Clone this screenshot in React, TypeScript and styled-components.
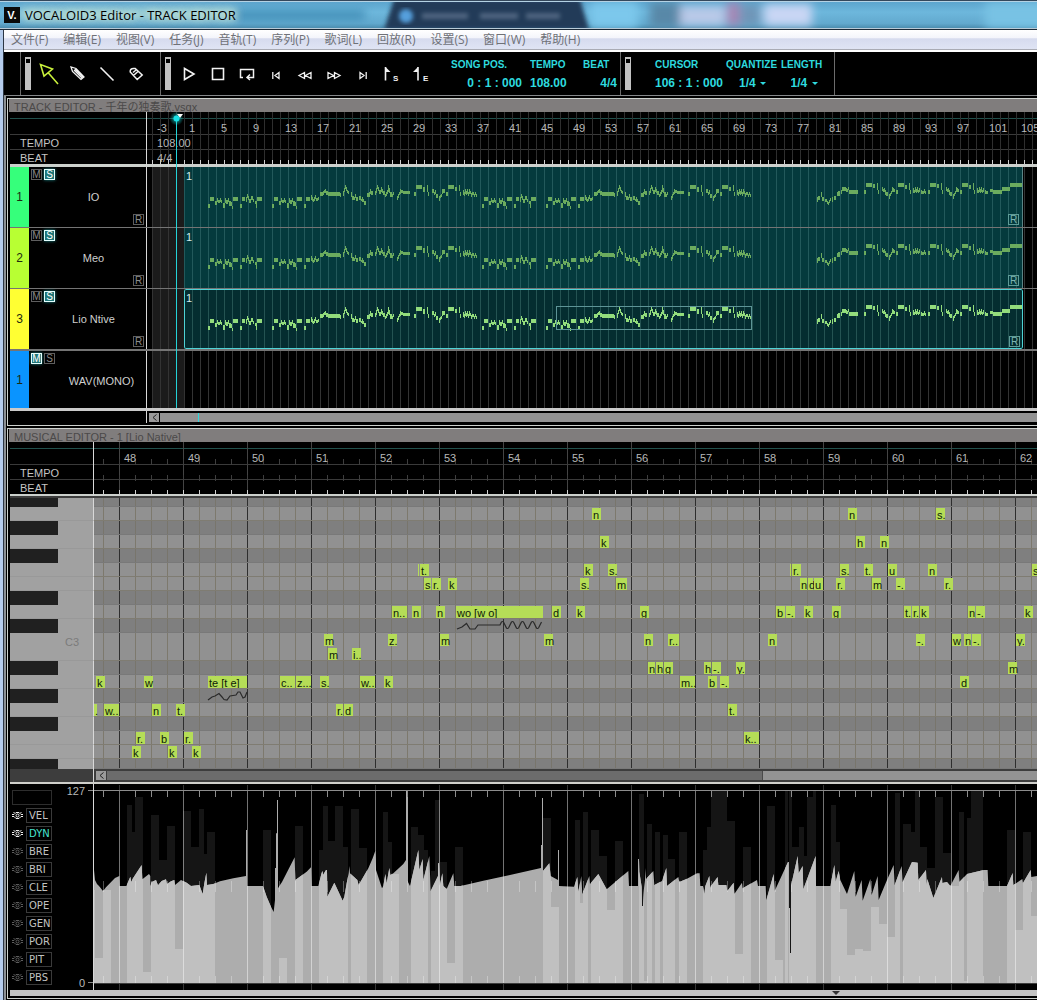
import React from "react";
import styled, { createGlobalStyle, css } from "styled-components";

const Global = createGlobalStyle`
  *, *::before, *::after { box-sizing: border-box; }
  html, body { margin: 0; background: #000; }
  body { font-family: "Liberation Sans", Arial, "Noto Sans CJK SC", sans-serif; font-size: 11px; color: #b8b8b8; overflow-x: hidden; }
  button, select { font: inherit; color: inherit; margin: 0; padding: 0; border: 0; background: none; }
  h1, h2 { margin: 0; font-weight: 400; }
`;

/* ---------- palette ---------- */
const CYAN = "#2edadf";
const RULE = "#ccd0cc";
const NOTE = "#b5dd57";

/* ---------- window frame ---------- */
const App_ = styled.div`
  min-height: 100vh;
  display: flex;
  flex-direction: column;
  overflow: hidden;
`;

const TitleBar = styled.header`
  position: relative;
  display: flex;
  align-items: center;
  gap: 5px;
  height: 30px;
  padding: 0 4px;
  overflow: hidden;
  background: linear-gradient(#5ba3cc, #6db7dc 40%, #62a9ce 80%, #4787a8);
  border-top: 1px solid #34485c;
  border-bottom: 1px solid #1c2a38;
  box-shadow: inset 0 1px #b4d2e4, inset 0 -1px #b9cbd8;
`;

const Glass = styled.svg`
  position: absolute;
  left: 0;
  top: 1px;
  width: 100%;
  height: 26px;
`;

const Logo = styled.div`
  position: relative;
  display: grid;
  place-items: center;
  width: 16px;
  height: 16px;
  background: #0a0a0a;
  color: #fff;
  font-size: 11px;
  font-weight: 700;
  line-height: 16px;
`;

const Title = styled.h1`
  position: relative;
  font-family: "Open Sans", "Noto Sans", sans-serif;
  font-size: 13px;
  line-height: 16px;
  color: #000;
  text-shadow: 0 0 6px rgba(230, 245, 220, 0.8), 0 0 10px rgba(230, 245, 220, 0.5);
`;

const Frame = styled.div`
  flex: 1;
  display: flex;
  flex-direction: column;
  min-width: 0;
  border-left: 1px solid #2c3644;
  margin-left: 3px;
  box-shadow: -3px 0 #b5ccec;
  background: #000;
`;

const MenuBar = styled.nav`
  display: flex;
  align-items: center;
  gap: 15px;
  height: 22px;
  padding: 0 7px 2px;
  background: linear-gradient(#fff, #f4f5fb 35%, #d6dbee 40%, #dfe4f4 86%, #a9abb4 87%, #a9abb4 91%, #fff 92%);
`;

const MenuItem = styled.button`
  font-family: "Open Sans", "Noto Sans CJK SC", sans-serif;
  font-size: 12px;
  line-height: 18px;
  color: #6f7177;
  white-space: nowrap;
`;

/* ---------- toolbar ---------- */
const ToolBar = styled.div`
  display: flex;
  height: 44px;
  padding-left: 16px;
  border-bottom: 1px solid #85888a;
  overflow: hidden;
`;

const ToolGroup = styled.div<{ $end?: number }>`
  display: flex;
  align-items: center;
  flex: none;
  padding: 0 ${(p) => p.$end ?? 0}px 0 4px;
  border-left: 1px solid #6c6c6c;
`;

const Bounds = styled.div`
  flex: 1;
  border-left: 1px solid #6c6c6c;
`;

const Grip = styled.div`
  width: 6px;
  height: 33px;
  padding: 2px 1px;
  background: #c2c2c2;
  &::before { content: ""; display: block; height: 4px; background: #000; }
`;

const Tools = styled.div<{ $start: number }>`
  display: flex;
  align-items: center;
  padding-left: ${(p) => p.$start}px;
`;

const ToolButton = styled.button`
  display: grid;
  place-items: center;
  width: 29px;
  height: 30px;
  svg { display: block; overflow: visible; }
`;

const Readouts = styled.div<{ $start: number }>`
  display: flex;
  gap: 8px;
  padding: 2px 0 0 ${(p) => p.$start}px;
  color: ${CYAN};
  font-weight: 700;
`;

const Field = styled.div<{ $w: number }>`
  display: flex;
  flex-direction: column;
  gap: 5px;
  width: ${(p) => p.$w}px;
  white-space: nowrap;
`;

const FieldLabel = styled.label`
  font-size: 10px;
  line-height: 12px;
`;

const FieldValue = styled.output<{ $right?: boolean }>`
  font-size: 12px;
  line-height: 14px;
  align-self: ${(p) => (p.$right ? "flex-end" : "flex-start")};
`;

const Picker = styled.div`
  display: flex;
  align-items: center;
  gap: 4px;
  align-self: center;
  padding-left: 6px;
  &::after { content: ""; border: 3px solid transparent; border-top-color: ${CYAN}; border-bottom: 0; }
  select { appearance: none; font-size: 12px; font-weight: 700; line-height: 14px; height: 14px; outline: none; }
`;

/* ---------- panels ---------- */
const Workspace = styled.main`
  display: flex;
  flex-direction: column;
  gap: 2px;
  padding: 2px 0 1px 3px;
  background: linear-gradient(90deg, #8b9094 0 2px, #000 2px);
`;

const Panel = styled.section`
  border: 1px solid ${RULE};
  border-right: 0;
  padding: 0 0 2px 2px;
  background: #000;
  min-width: 0;
`;

const PanelTitle = styled.h2`
  height: 13px;
  margin-left: -1px;
  padding-left: 5px;
  font-size: 11px;
  line-height: 16px;
  overflow: hidden;
  white-space: nowrap;
  background: #807d7d;
  color: #4b4949;
`;

const Line = styled.div<{ $left: number }>`
  display: grid;
  grid-template-columns: ${(p) => p.$left}px minmax(0, 1fr);
`;

const Side = styled.div`
  border-right: 1px solid #d8d8d8;
  min-width: 0;
`;

const Ruler = styled.div<{ $heavy: number }>`
  border-bottom: ${(p) => p.$heavy}px solid ${RULE};
`;

const RulerRow = styled(Line)<{ $kind: "bars" | "tempo" | "beat" }>`
  height: ${(p) => ({ bars: 23, tempo: 15, beat: 14 })[p.$kind]}px;
  line-height: ${(p) => (p.$kind === "bars" ? 32 : 16)}px;
  background:
    ${(p) => (p.$kind === "bars" ? "linear-gradient(#21504c, #21504c) 0 6px / 100% 1px no-repeat," : "")}
    ${(p) => (p.$kind === "beat" ? "none" : "linear-gradient(#3a3a3a, #3a3a3a) 0 100% / 100% 1px no-repeat")};
`;

const RulerName = styled(Side)`
  padding-left: 10px;
  color: #c4c4c4;
`;

const BarNumbers = styled.div<{ $start: number }>`
  display: flex;
  padding-left: ${(p) => p.$start}px;
  overflow: hidden;
`;

const BarNumber = styled.span<{ $pitch: number }>`
  flex: none;
  width: ${(p) => p.$pitch}px;
  padding-left: 5px;
`;

const SongTicks = styled.div<{ $beat?: boolean; $flush?: boolean }>`
  overflow: hidden;
  padding-left: ${(p) => (p.$flush ? 0 : 10)}px;
  background:
    ${(p) => (p.$beat ? "linear-gradient(90deg, #d0d0d0 1px, transparent 1px) 5px 100% / 8px 6px repeat-x," : "")}
    linear-gradient(90deg, #2e2e2e 1px, transparent 1px) 5px 2px / 8px 100%;
`;

const MeasureTicks = styled.div<{ $beat?: boolean }>`
  overflow: hidden;
  background:
    linear-gradient(90deg, ${(p) => (p.$beat ? "#d0d0d0" : "#3e3e3e")} 1px, transparent 1px) 9px 100% / 16px 6px repeat-x,
    linear-gradient(90deg, #444 1px, transparent 1px) 25px 2px / 64px 100%;
`;

/* ---------- track list ---------- */
const Stage = styled.div`
  position: relative;
`;

const Playhead = styled.svg`
  position: absolute;
  left: 158px;
  top: 0;
  width: 20px;
  height: 296px;
`;

const TrackRow = styled(Line)<{ $line: number; $height: number; $strong?: boolean }>`
  height: ${(p) => p.$height}px;
  border-bottom: ${(p) => p.$line}px solid ${(p) => (p.$strong ? "#cacaca" : "#747474")};
`;

const TrackHead = styled(Side)`
  display: flex;
`;

const TrackIndex = styled.div<{ $color: string }>`
  display: grid;
  place-items: center;
  width: 19px;
  background: ${(p) => p.$color};
  color: #1c2a10;
  font-size: 12px;
`;

const TrackInfo = styled.div`
  flex: 1;
  display: flex;
  flex-direction: column;
  justify-content: space-between;
  padding: 2px;
`;

const Switches = styled.div`
  display: flex;
  gap: 2px;
`;

const chip = css`
  display: grid;
  place-items: center;
  width: 11px;
  height: 11px;
  border: 1px solid #5e5e5e;
  color: #8a8a8a;
  font-size: 10px;
  line-height: 9px;
`;

const Switch = styled.button<{ $on?: boolean }>`
  ${chip}
  ${(p) => p.$on && css`
    background: #1f7678;
    border-color: #e4ffff;
    color: #fff;
    box-shadow: 0 0 3px #1f8a8c;
  `}
`;

const Render = styled.button<{ $teal?: boolean }>`
  ${chip}
  align-self: flex-end;
  ${(p) => p.$teal && css`
    border-color: #5f9c98;
    color: #7db4b0;
  `}
`;

const SwitchGap = styled.div`
  height: 9px;
`;

const TrackName = styled.div<{ $wide?: boolean }>`
  padding-left: ${(p) => (p.$wide ? 28 : 12)}px;
  text-align: center;
  line-height: 14px;
  color: #cfcfcf;
`;

const Timeline = styled.div`
  display: flex;
  overflow: hidden;
  padding-left: 37px;
  background:
    linear-gradient(90deg, #333 1px, transparent 1px) 5px 0 / 8px 100%,
    linear-gradient(#1b1b1b, #1b1b1b) 5px 0 / 32px 100% no-repeat;
`;

const EmptyTimeline = styled(Timeline)`
  height: 100%;
`;

const Clip = styled.div<{ $active?: boolean }>`
  position: relative;
  flex: none;
  width: 839px;
  height: 60px;
  background:
    linear-gradient(90deg, ${(p) => (p.$active ? "#245352" : "#22595b")} 1px, transparent 1px) 0 0 / 8px 100%,
    ${(p) => (p.$active ? "#042d30" : "#043a3d")};
  border-right: 1px solid #5b8587;
  ${(p) => p.$active && css`
    border: 0;
    border-radius: 2px;
    box-shadow: inset 0 0 0 1px #4fd3d6;
  `}
`;

const ClipIndex = styled.span`
  position: absolute;
  left: 2px;
  top: 2px;
  line-height: 14px;
  color: #d5ecec;
`;

const ClipNotes = styled.svg`
  display: block;
  width: 838px;
  height: 60px;
`;

const ClipRender = styled.div`
  position: absolute;
  right: 3px;
  bottom: 2px;
`;

const ViewRange = styled.div`
  position: absolute;
  left: 372px;
  top: 17px;
  width: 196px;
  height: 24px;
  border: 1px solid #5d9496;
`;

/* ---------- scroll bars ---------- */
const ScrollRow = styled(Line)<{ $dark?: boolean }>`
  height: ${(p) => (p.$dark ? 13 : 12)}px;
  background: ${(p) => (p.$dark ? "#3d3d3d" : "#000")};
`;

const Scroll = styled.div`
  display: flex;
  gap: 1px;
  padding: 2px 0 0 2px;
  height: 11px;
`;

const ScrollArrow = styled.button`
  display: grid;
  place-items: center;
  width: 10px;
  height: 9px;
  background: #9a9a9a;
`;

const ScrollTrack = styled.div`
  flex: 1;
  display: flex;
  background: #939393;
`;

const ScrollCursor = styled.i`
  width: 1px;
  height: 9px;
  margin-left: 38px;
  background: ${CYAN};
`;

const ScrollThumb = styled.i`
  width: calc(100% * 12 / 17);
  height: 9px;
  background: #6c6c6c;
  border-right: 1px solid #4a4a4a;
`;

/* ---------- piano roll ---------- */
const Roll = styled.div`
  position: relative;
  overflow: hidden;
  border-top: 2px solid #3d3d3d;
`;

const KeyRow = styled(Line)<{ $height: number }>`
  height: ${(p) => p.$height}px;
`;

const Key = styled(Side)<{ $black: boolean }>`
  padding-left: 55px;
  line-height: 18px;
  color: #7b7b7b;
  border-bottom: ${(p) => (p.$black ? 0 : 1)}px solid #999;
  background: ${(p) => (p.$black ? "linear-gradient(#202020, #202020) 0 0 / 48px 100% no-repeat," : "")} #a1a1a1;
`;

const KeyLane = styled.div<{ $black: boolean }>`
  border-bottom: 1px solid ${(p) => (p.$black ? "#797979" : "#7f7c72")};
  background:
    linear-gradient(90deg, #2e2e2e 1px, transparent 1px) 25px 0 / 64px 15px,
    linear-gradient(90deg, ${(p) => (p.$black ? "#78756c" : "#7d796d")} 1px, transparent 1px) 9px 0 / 16px 15px,
    ${(p) => (p.$black ? "#7f7f7f" : "#919191")};
`;

const NoteLayer = styled.div`
  position: absolute;
  inset: 0 0 0 84px;
  overflow: hidden;
`;

const NoteBox = styled.div`
  position: absolute;
  height: 12px;
  padding-left: 1px;
  overflow-x: visible;
  overflow-y: clip;
  white-space: nowrap;
  line-height: 14px;
  color: #0d1a08;
  background: ${NOTE};
`;

const Vibrato = styled.svg`
  position: absolute;
  inset: 0;
  width: 100%;
  height: 100%;
`;

/* ---------- parameter lane ---------- */
const ParamLane = styled(Line)`
  height: 208px;
  border-top: 2px solid #cfcfcb;
`;

const ParamSide = styled(Side)`
  display: flex;
  justify-content: space-between;
  padding: 0 0 0 2px;
`;

const ParamList = styled.div`
  display: flex;
  flex-direction: column;
  gap: 3px;
  padding-top: 6px;
`;

const ParamBlank = styled.div`
  width: 40px;
  height: 15px;
  border: 1px solid #2d2d2d;
`;

const ParamRow = styled.div`
  display: flex;
  align-items: center;
  gap: 3px;
`;

const EyeButton = styled.button<{ $on: boolean }>`
  display: grid;
  place-items: center;
  width: 11px;
  height: 15px;
  color: ${(p) => (p.$on ? "#f0f0f0" : "#5c5c5c")};
`;

const ParamButton = styled.button<{ $active: boolean }>`
  width: 26px;
  height: 15px;
  padding-left: 2px;
  border: 1px solid #3a3a3a;
  font-family: "DejaVu Sans", sans-serif;
  font-size: 10px;
  line-height: 13px;
  text-align: left;
  white-space: nowrap;
  color: ${(p) => (p.$active ? "#46e0cf" : "#c2c2c2")};
`;

const Scale = styled.div`
  display: flex;
  flex-direction: column;
  justify-content: space-between;
  align-items: flex-end;
  width: 30px;
`;

const ScaleMark = styled.div`
  display: flex;
  gap: 3px;
  line-height: 14px;
  &::after { content: ""; width: 5px; height: 1px; margin-top: 6px; background: #8a8a8a; }
`;

const Chart = styled.svg`
  display: block;
  width: 100%;
  height: 206px;
  overflow: hidden;
`;

const Splitter = styled.div`
  height: 6px;
  padding: 1px 0 0 80%;
  background: #c3c3c3;
  svg { display: block; }
`;

/* ---------- song data ---------- */
type Rect = [number, number, number, number];
const shift = (notes: Rect[], dx: number): Rect[] => notes.map(([x, y, w, h]) => [x + dx, y, w, h]);

const verse: Rect[] = [
  [624, 327, 6, 12], [630, 306, 12, 12], [645, 318, 6, 12], [651, 309, 3, 12], [654, 315, 6, 9], [660, 309, 3, 12],
  [663, 315, 3, 9], [669, 324, 6, 14], [675, 309, 3, 14], [678, 315, 6, 12], [684, 309, 3, 12], [687, 318, 6, 14],
  [693, 321, 3, 12], [696, 333, 3, 10], [699, 306, 15, 12],
];
const verseEnd: Rect[] = [
  [720, 327, 6, 12], [726, 306, 9, 12], [738, 306, 3, 15], [741, 297, 3, 12], [744, 303, 3, 12], [747, 312, 6, 12],
  [753, 303, 6, 12], [759, 312, 3, 9], [765, 318, 6, 8], [768, 318, 3, 20], [771, 306, 15, 12],
];
const bridge: Rect[] = [
  [912, 327, 6, 12], [918, 306, 12, 12], [933, 300, 3, 15], [936, 306, 3, 12], [939, 312, 3, 10], [942, 306, 3, 12],
  [945, 300, 3, 12], [948, 309, 6, 10], [954, 306, 3, 10], [960, 291, 9, 12], [969, 288, 3, 12], [972, 285, 3, 10],
  [975, 282, 3, 12], [978, 288, 6, 12], [984, 291, 36, 12], [1020, 294, 3, 12],
];
const chorus: Rect[] = shift([
  [9, 288, 3, 14], [12, 279, 3, 12], [15, 270, 3, 12], [18, 276, 3, 12], [21, 285, 3, 9], [24, 288, 3, 9],
  [33, 291, 3, 14], [36, 303, 6, 12], [42, 306, 3, 9], [45, 297, 3, 12], [48, 306, 6, 12], [57, 303, 6, 12],
  [63, 312, 3, 6], [66, 306, 3, 14], [69, 312, 3, 9], [72, 318, 6, 12], [81, 294, 6, 12], [87, 291, 3, 14],
  [90, 282, 3, 14], [93, 288, 6, 12], [105, 288, 3, 12], [108, 279, 3, 14], [111, 270, 3, 12], [114, 276, 3, 12],
  [117, 285, 6, 12], [123, 276, 3, 14], [126, 282, 3, 12], [129, 288, 6, 12], [135, 297, 3, 10], [138, 291, 3, 12],
  [141, 285, 3, 12], [144, 270, 3, 20], [147, 279, 3, 14], [150, 291, 6, 14], [156, 297, 3, 9], [159, 291, 3, 9],
  [171, 303, 3, 12], [174, 297, 3, 12], [177, 291, 3, 9], [180, 282, 3, 14], [183, 285, 6, 9], [189, 288, 21, 10],
  [222, 291, 6, 12], [228, 270, 18, 12], [249, 276, 6, 14], [261, 270, 3, 20], [264, 291, 3, 12], [276, 282, 6, 12],
  [282, 291, 3, 9], [285, 285, 3, 12], [288, 297, 6, 12], [297, 303, 3, 14], [300, 300, 3, 10], [303, 297, 3, 9],
  [306, 282, 3, 14], [309, 282, 6, 12], [318, 291, 6, 12], [324, 270, 18, 12], [345, 276, 6, 12], [357, 270, 3, 18],
  [360, 291, 3, 12], [369, 285, 3, 14], [372, 291, 3, 12], [375, 282, 3, 14], [378, 288, 3, 12], [381, 282, 3, 14],
  [384, 291, 3, 12], [387, 282, 3, 14], [390, 288, 3, 9], [393, 294, 3, 12], [396, 291, 6, 9], [402, 297, 3, 9],
  [405, 291, 3, 9], [408, 297, 3, 10],
], 1020);
const opening = [...verse, ...verseEnd, ...shift(verse, 192), ...bridge, ...chorus];

const rise: Rect[] = [
  [390, 306, 3, 15], [393, 303, 6, 12], [402, 291, 3, 15], [405, 306, 6, 12], [414, 312, 6, 9], [420, 318, 3, 9],
  [423, 321, 3, 9], [426, 315, 3, 10], [429, 309, 3, 9], [435, 306, 3, 15], [441, 303, 6, 12], [450, 291, 3, 12],
  [453, 288, 6, 14], [462, 285, 3, 12], [465, 276, 12, 12], [477, 279, 3, 12], [480, 282, 3, 9], [483, 276, 3, 9],
  [486, 285, 27, 12],
];
const hookA: Rect[] = [
  [531, 285, 6, 12], [537, 264, 18, 12], [558, 267, 6, 12], [570, 264, 3, 20], [573, 285, 3, 12], [585, 276, 3, 12],
  [588, 282, 3, 9], [591, 279, 3, 12], [594, 285, 3, 14], [597, 291, 6, 12], [606, 297, 3, 14], [609, 294, 3, 10],
  [612, 288, 3, 9], [615, 276, 3, 14], [618, 279, 3, 12], [621, 282, 3, 9],
];
const hookB: Rect[] = [
  [627, 285, 6, 12], [633, 264, 18, 12], [654, 270, 6, 12], [666, 264, 3, 20], [669, 285, 3, 12], [678, 279, 3, 14],
  [681, 285, 3, 9], [684, 276, 3, 14], [687, 282, 3, 12], [690, 276, 3, 14], [693, 285, 3, 9], [696, 279, 3, 12],
  [702, 285, 3, 12], [705, 288, 6, 9],
];
const ending: Rect[] = [
  [711, 282, 3, 12], [714, 288, 3, 10], [909, 282, 9, 9], [918, 286, 27, 10], [945, 276, 24, 12], [969, 264, 36, 12],
];
const finale = shift([...rise, ...hookA, ...hookB, ...shift(hookA, 192), ...shift(hookB, 192), ...ending], 2061);

const songPath = [...opening, ...shift(opening, 822), ...finale]
  .map(([x, y, w, h]) => `M${x} ${y}h${w}v${h}h${-w}z`)
  .join("");

const tracks = [
  { id: 1, name: "IO", color: "#36ff7b" },
  { id: 2, name: "Meo", color: "#b8ff33" },
  { id: 3, name: "Lio Ntive", color: "#ffff33" },
];

const songBars = Array.from({ length: 28 }, (_, i) => (i === 0 ? -3 : 1 + (i - 1) * 4));
const measures = Array.from({ length: 15 }, (_, i) => 48 + i);

/* x, width, pitch row, lyric */
type Note = [number, number, number, string];
const notes: Note[] = [
  [96, 9, 12, "k"], [144, 9, 12, "w"], [94, 3, 14, "."], [104, 15, 14, "w.."], [152, 9, 14, "n"], [176, 9, 14, "t."],
  [136, 9, 16, "r."], [132, 9, 17, "k"], [160, 9, 16, "b"], [168, 9, 17, "k"], [184, 9, 16, "r."], [192, 9, 17, "k"],
  [208, 39, 12, "te [t e]"], [280, 15, 12, "c.."], [296, 15, 12, "z..."], [320, 9, 12, "s."], [324, 9, 9, "m"],
  [328, 9, 10, "m"], [336, 7, 14, "r."], [344, 9, 14, "d"], [352, 9, 10, "i.."], [360, 15, 12, "w.."], [384, 9, 12, "k"],
  [388, 9, 9, "z."], [392, 15, 7, "n.."], [412, 9, 7, "n"], [436, 9, 7, "n"], [418, 1, 4, ""], [420, 9, 4, "t."],
  [424, 7, 5, "s"], [432, 9, 5, "r."], [448, 9, 5, "k"], [440, 9, 9, "m"], [456, 87, 7, "wo [w o]"], [544, 9, 9, "m"],
  [552, 9, 7, "d"], [576, 9, 7, "k"], [580, 9, 5, "s."], [584, 9, 4, "k"], [592, 9, 0, "n"], [600, 9, 2, "k"],
  [608, 9, 4, "s."], [616, 11, 5, "m"], [640, 9, 7, "g"], [644, 9, 9, "n"], [668, 11, 9, "r.."], [648, 7, 11, "n"],
  [656, 7, 11, "h"], [664, 9, 11, "g"], [680, 15, 12, "m.."], [704, 7, 11, "h"], [712, 9, 11, "-."], [736, 9, 11, "y."],
  [708, 9, 12, "b"], [720, 9, 12, "-."], [728, 9, 14, "t."], [744, 15, 16, "k.."], [768, 9, 9, "n"], [776, 9, 7, "b"],
  [786, 9, 7, "-."], [804, 9, 7, "k"], [790, 1, 4, ""], [792, 9, 4, "r."], [800, 7, 5, "n"], [808, 5, 5, "d"],
  [814, 9, 5, "u"], [832, 9, 7, "g"], [836, 9, 5, "r."], [840, 9, 4, "s."], [848, 9, 0, "n"], [856, 9, 2, "h"],
  [864, 9, 4, "t."], [872, 9, 5, "m"], [880, 9, 2, "n"], [888, 9, 4, "u"], [896, 9, 5, "-."], [904, 7, 7, "t."],
  [912, 7, 7, "r."], [920, 9, 7, "k"], [916, 9, 9, "-."], [928, 9, 4, "n"], [936, 9, 0, "s."], [944, 9, 5, "r."],
  [952, 9, 9, "w"], [964, 7, 9, "n"], [972, 9, 9, "-."], [968, 7, 7, "n"], [976, 9, 7, "-."], [960, 9, 12, "d"],
  [1016, 9, 9, "y."], [1008, 9, 11, "m"], [1024, 9, 7, "k"], [1032, 9, 4, "s"],
];

const keyPattern = "BWBWBWWBWBWWBWBWBWWB";
const keyHeight = (i: number) => (i === 0 ? 9 : i === keyPattern.length - 1 ? 10 : 14);

/* velocity columns, one list for each third of the lane: start, end, top */
type Column = [number, number, number];
const velocity: [number, Column[]][] = [
  [0, [[282, 285, 330], [285, 309, 533], [309, 333, 330], [380, 396, 75], [396, 405, 156], [405, 429, 51], [429, 453, 575],
    [453, 477, 105], [477, 501, 240], [501, 525, 138], [525, 549, 506], [549, 573, 93], [573, 597, 201], [597, 612, 87],
    [612, 621, 222], [621, 645, 156], [789, 813, 150], [837, 861, 533], [885, 909, 138], [957, 969, 210], [969, 984, 78],
    [984, 1005, 183], [1005, 1029, 78], [1029, 1044, 201]]],
  [1020, [[33, 57, 87], [57, 81, 204], [129, 144, 96], [144, 156, 186], [156, 177, 282], [213, 234, 141], [234, 252, 165],
    [252, 264, 210], [273, 285, 273], [285, 300, 60], [300, 321, 246], [321, 345, 548], [345, 369, 201], [609, 633, 114],
    [633, 657, 380], [705, 720, 120], [720, 729, 368], [729, 744, 96], [753, 777, 150], [777, 801, 228], [801, 825, 389],
    [825, 849, 183], [897, 912, 42], [912, 921, 603], [921, 936, 132], [945, 960, 156], [969, 984, 165], [984, 1005, 237],
    [1017, 1041, 156]]],
  [2061, [[48, 60, 210], [60, 72, 141], [72, 120, 33], [120, 144, 123], [144, 168, 521], [168, 192, 201], [240, 264, 78],
    [264, 288, 540], [294, 303, 33], [306, 315, 33], [315, 336, 201], [336, 351, 141], [351, 360, 228], [360, 378, 51],
    [378, 387, 33], [432, 447, 75], [447, 459, 186], [459, 480, 386], [480, 504, 524], [504, 528, 506], [528, 552, 512],
    [552, 576, 380], [576, 600, 431], [600, 624, 470], [624, 639, 39], [648, 672, 132], [672, 684, 156], [684, 699, 33],
    [699, 720, 201], [720, 744, 264], [744, 768, 51], [768, 792, 219], [792, 816, 318], [816, 831, 96], [831, 840, 603],
    [840, 852, 114], [852, 888, 33], [960, 984, 150], [984, 1008, 450], [1008, 1032, 156], [1032, 1056, 407]]],
];
const velocityPath = velocity
  .flatMap(([dx, cols]) => cols.map(([a, b, top]) => `M${a + dx} ${top}H${b + dx}V609H${a + dx}z`))
  .join("");

const dynamics: [number, number[]][] = [
  [0, [282, 270, 285, 300, 291, 312, 297, 318, 309, 333, 318, 322, 345, 294, 358, 288, 359, 318, 379, 318, 391, 290, 394, 306,
    398, 296, 425, 255, 427, 298, 447, 282, 451, 288, 451, 318, 455, 306, 468, 300, 474, 316, 485, 303, 498, 298, 501, 312,
    513, 304, 523, 300, 525, 315, 543, 300, 560, 308, 573, 318, 598, 315, 608, 342, 613, 310, 619, 278, 621, 315, 640, 312,
    660, 304, 700, 295, 738, 288, 738, 150, 741, 150, 741, 318, 789, 318, 800, 350, 812, 378, 821, 396, 825, 360, 825, 264,
    828, 264, 828, 160, 831, 160, 831, 60, 834, 60, 834, 325, 838, 318, 846, 306, 884, 232, 886, 300, 920, 275, 933, 262,
    935, 318, 955, 318, 965, 278, 968, 273, 969, 285, 978, 270, 981, 270, 982, 350, 1003, 308]],
  [1020, [8, 362, 13, 350, 20, 310, 26, 280, 28, 258, 30, 280, 52, 300, 56, 315, 85, 265, 98, 235, 106, 212, 108, 270, 126, 325,
    130, 318, 136, 282, 140, 310, 148, 264, 151, 285, 160, 280, 190, 252, 198, 240, 198, 30, 204, 30, 204, 306, 210, 318,
    235, 210, 238, 270, 248, 237, 250, 300, 268, 228, 272, 333, 294, 288, 294, 250, 297, 250, 299, 318, 307, 280, 310, 318,
    320, 327, 340, 280, 343, 318, 362, 318, 430, 302, 510, 285, 603, 264, 603, 195, 606, 195, 606, 54, 609, 54, 609, 273,
    628, 250, 632, 288, 654, 300, 654, 210, 657, 210, 657, 318, 702, 320, 712, 291, 715, 335, 724, 288, 727, 342, 748, 288,
    750, 312, 775, 282, 800, 328, 865, 273, 867, 318, 894, 318, 894, 237, 897, 237, 898, 275, 905, 320, 906, 378, 909, 378,
    912, 325, 915, 300, 916, 264, 918, 297, 940, 273, 943, 315, 966, 303, 979, 264, 981, 318, 1015, 291, 1018, 306]],
  [2061, [0, 296, 30, 280, 38, 280, 40, 318, 48, 318, 52, 342, 55, 318, 67, 288, 70, 325, 72, 318, 92, 291, 94, 315, 118, 315,
    121, 333, 140, 308, 142, 342, 165, 308, 167, 325, 210, 300, 213, 318, 236, 318, 238, 360, 260, 282, 263, 333, 303, 246,
    306, 246, 306, 384, 309, 384, 309, 519, 312, 519, 312, 318, 332, 228, 335, 280, 347, 258, 349, 328, 386, 228, 387, 318,
    430, 318, 442, 255, 446, 305, 455, 273, 460, 300, 480, 342, 502, 273, 506, 350, 524, 300, 527, 362, 550, 297, 554, 345,
    572, 288, 575, 360, 600, 300, 620, 255, 623, 315, 644, 258, 647, 306, 675, 246, 692, 248, 694, 300, 717, 270, 719, 315,
    721, 297, 739, 354, 765, 291, 766, 309, 780, 306, 790, 318, 815, 270, 817, 306, 840, 282, 890, 270, 902, 270, 904, 318,
    960, 318, 977, 279, 979, 315, 1006, 297, 1008, 309, 1031, 270, 1033, 291, 1056, 287]],
];
const dynamicsPath =
  "M282 609" +
  dynamics
    .flatMap(([dx, v]) => v.flatMap((n, i) => (i % 2 === 0 ? [`L${n + dx} ${v[i + 1]}`] : [])))
    .join("") +
  "V609z";

const params = ["VEL", "DYN", "BRE", "BRI", "CLE", "OPE", "GEN", "POR", "PIT", "PBS"];
const menu = ["文件(F)", "编辑(E)", "视图(V)", "任务(J)", "音轨(T)", "序列(P)", "歌词(L)", "回放(R)", "设置(S)", "窗口(W)", "帮助(H)"];

/* ---------- icons ---------- */
const Icon = ({ w, h, children, color = "#f2f2f2" }: { w: number; h: number; children: React.ReactNode; color?: string }) => (
  <svg width={w} height={h} viewBox={`0 0 ${w} ${h}`} fill="none" stroke={color} strokeWidth="1.6" aria-hidden="true">
    {children}
  </svg>
);

const editTools = [
  { name: "Arrow", icon: <Icon w={20} h={22} color="#c9f03c"><path d="M1.500 1.500l3.500 11.500L13.500 6zM9 9.500l10 11.500" /></Icon> },
  { name: "Pencil", icon: <Icon w={15} h={15}><path d="M1 1l1.500 4.500 8.500 8 3-2.500-8-8.500zM4 4l8 8M5 3l8 8" strokeWidth="1.300" /></Icon> },
  { name: "Line", icon: <Icon w={14} h={14}><path d="M.5.5l13 13" /></Icon> },
  { name: "Eraser", icon: <Icon w={14} h={14}><path d="M4.500 1.500Q1 1.500 1.200 5l7 7.500 5-4.500-7-6.500zM4.500 8.500l5-4.500M4 5.500l3-2.500" strokeWidth="1.500" /></Icon> },
];

const transport = [
  { name: "Play", icon: <Icon w={12} h={14}><path d="M1.500 1.500v11l9.500-5.500z" /></Icon> },
  { name: "Stop", icon: <Icon w={14} h={14}><path d="M1.500 1.500h11v11h-11z" /></Icon> },
  { name: "Loop", icon: <Icon w={16} h={12}><path d="M4 9.500H1.500v-8h13v8H9M11 6.500l-3 3 3 2.500" strokeWidth="1.500" /></Icon> },
  { name: "To start", icon: <Icon w={8} h={12}><path d="M.8 4v7M7 4.500v6L3 7.500z" strokeWidth="1.300" /></Icon> },
  { name: "Rewind", icon: <Icon w={14} h={12}><path d="M6.500 4.500v6L1 7.500zM13 4.500v6L7.500 7.500z" strokeWidth="1.300" /></Icon> },
  { name: "Forward", icon: <Icon w={14} h={12}><path d="M1 4.500v6L6.500 7.500zM7.500 4.500v6L13 7.500z" strokeWidth="1.300" /></Icon> },
  { name: "To end", icon: <Icon w={8} h={12}><path d="M7.200 4v7M1 4.500v6L5 7.500z" strokeWidth="1.300" /></Icon> },
  {
    name: "Start marker",
    icon: (
      <Icon w={15} h={15}>
        <path d="M1.500 1v13.500" />
        <path d="M1.500 1l5 5h-5z" fill="#f2f2f2" stroke="none" />
        <text x="9" y="15" fill="#f2f2f2" stroke="none" fontSize="8" fontWeight="700">S</text>
      </Icon>
    ),
  },
  {
    name: "End marker",
    icon: (
      <Icon w={16} h={15}>
        <path d="M5 1v13.500" />
        <path d="M5 1L0 6h5z" fill="#f2f2f2" stroke="none" />
        <text x="10" y="15" fill="#f2f2f2" stroke="none" fontSize="8" fontWeight="700">E</text>
      </Icon>
    ),
  },
];

const Eye = () => (
  <svg width="11" height="9" viewBox="0 0 11 9" fill="none" stroke="currentColor" strokeWidth="1" aria-hidden="true">
    <path d="M0 3.500h2l2-2h3l2 2h2M0 5.500h2l2 2h3l2-2h2M1.500 2l1-1M9.500 2l-1-1" />
    <circle cx="5.500" cy="4.500" r="1.500" />
  </svg>
);

const Arrow = () => (
  <svg width="5" height="7" viewBox="0 0 5 7" fill="none" stroke="#222" aria-hidden="true">
    <path d="M4.500.5l-3.500 3 3.500 3" />
  </svg>
);

const GlassBackdrop = () => (
  <Glass aria-hidden="true">
    <defs>
      <filter id="soft" x="-20%" y="-60%" width="140%" height="220%"><feGaussianBlur stdDeviation="5" /></filter>
      <filter id="edge"><feGaussianBlur stdDeviation="2" /></filter>
    </defs>
    <g filter="url(#soft)">
      <rect x="20" y="6" width="215" height="12" fill="#a3d3d6" />
      <rect x="235" y="8" width="130" height="10" fill="#438fb8" />
      <rect x="590" width="48" height="26" fill="#7cc8ec" />
      <rect x="650" width="30" height="26" fill="#5888a8" />
      <rect x="680" y="4" width="45" height="20" fill="#b9c9e8" />
      <rect x="727" width="12" height="24" fill="#a884b4" />
      <rect x="740" y="2" width="20" height="22" fill="#6f95b8" />
      <rect x="764" y="2" width="48" height="22" fill="#c9d6f4" />
      <rect x="985" y="0" width="200" height="26" fill="#78c2e4" />
    </g>
    <path d="M384 28L394-3h186l9 31z" fill="#233a58" filter="url(#edge)" />
    <g filter="url(#edge)">
      <circle cx="406" cy="14" r="7" fill="#559fdc" />
      <path d="M422 14h46M480 14h38M526 14h34" stroke="#6d819c" strokeWidth="6" opacity=".6" />
    </g>
  </Glass>
);

/* ---------- parts ---------- */
function Transport() {
  return (
    <ToolBar>
      <ToolGroup $end={10}>
        <Grip />
        <Tools $start={3}>
          {editTools.map((t) => <ToolButton key={t.name} aria-label={t.name}>{t.icon}</ToolButton>)}
        </Tools>
      </ToolGroup>
      <ToolGroup $end={3}>
        <Grip />
        <Tools $start={3}>
          {transport.map((t) => <ToolButton key={t.name} aria-label={t.name}>{t.icon}</ToolButton>)}
        </Tools>
        <Readouts $start={16}>
          <Field $w={71}><FieldLabel htmlFor="song">SONG POS.</FieldLabel><FieldValue id="song" $right>0 : 1 : 000</FieldValue></Field>
          <Field $w={45}><FieldLabel htmlFor="tempo">TEMPO</FieldLabel><FieldValue id="tempo">108.00</FieldValue></Field>
          <Field $w={34}><FieldLabel htmlFor="beat">BEAT</FieldLabel><FieldValue id="beat" $right>4/4</FieldValue></Field>
        </Readouts>
      </ToolGroup>
      <ToolGroup $end={13}>
        <Grip />
        <Readouts $start={24}>
          <Field $w={63}><FieldLabel htmlFor="cursor">CURSOR</FieldLabel><FieldValue id="cursor">106 : 1 : 000</FieldValue></Field>
          <Field $w={47}><FieldLabel htmlFor="quantize">QUANTIZE</FieldLabel><Picker><select id="quantize"><option>1/4</option></select></Picker></Field>
          <Field $w={40}><FieldLabel htmlFor="length">LENGTH</FieldLabel><Picker><select id="length"><option>1/4</option></select></Picker></Field>
        </Readouts>
      </ToolGroup>
      <Bounds />
    </ToolBar>
  );
}

function TrackEditor() {
  return (
    <Panel>
      <PanelTitle>TRACK EDITOR - 千年の独奏歌.vsqx</PanelTitle>
      <Stage>
        <Ruler $heavy={3}>
          <RulerRow $left={137} $kind="bars">
            <RulerName />
            <SongTicks $flush>
              <BarNumbers $start={5}>
                {songBars.map((n) => <BarNumber key={n} $pitch={32}>{n}</BarNumber>)}
              </BarNumbers>
            </SongTicks>
          </RulerRow>
          <RulerRow $left={137} $kind="tempo"><RulerName>TEMPO</RulerName><SongTicks>108.00</SongTicks></RulerRow>
          <RulerRow $left={137} $kind="beat"><RulerName>BEAT</RulerName><SongTicks $beat>4/4</SongTicks></RulerRow>
        </Ruler>
        {tracks.map((t) => (
          <TrackRow key={t.id} $left={137} $height={t.id === 3 ? 62 : 61} $line={t.id === 3 ? 2 : 1}>
            <TrackHead>
              <TrackIndex $color={t.color}>{t.id}</TrackIndex>
              <TrackInfo>
                <Switches><Switch>M</Switch><Switch $on>S</Switch></Switches>
                <TrackName>{t.name}</TrackName>
                <Render>R</Render>
              </TrackInfo>
            </TrackHead>
            <Timeline>
              <Clip $active={t.id === 3}>
                <ClipNotes viewBox="552 216 2514 180" shapeRendering="crispEdges" aria-hidden="true">
                  <path d={songPath} fill={t.id === 3 ? "#93dc7c" : "#6bab5e"} />
                </ClipNotes>
                <ClipIndex>1</ClipIndex>
                {t.id === 3 && <ViewRange />}
                <ClipRender><Render $teal>R</Render></ClipRender>
              </Clip>
            </Timeline>
          </TrackRow>
        ))}
        <TrackRow $left={137} $height={60} $line={3} $strong>
          <TrackHead>
            <TrackIndex $color="#0a94ff">1</TrackIndex>
            <TrackInfo>
              <Switches><Switch $on>M</Switch><Switch>S</Switch></Switches>
              <TrackName $wide>WAV(MONO)</TrackName>
              <SwitchGap />
            </TrackInfo>
          </TrackHead>
          <EmptyTimeline />
        </TrackRow>
        <Playhead aria-hidden="true">
          <defs>
            <radialGradient id="glow"><stop offset="0" stopColor="#1cc" stopOpacity=".9" /><stop offset="1" stopColor="#1cc" stopOpacity="0" /></radialGradient>
          </defs>
          <circle cx="8.500" cy="6.500" r="7" fill="url(#glow)" />
          <path d="M9 2h6l-3 4z" fill="#fff" />
          <path d="M8.500 6v290" stroke="#24d3d8" />
          <circle cx="8.500" cy="6.500" r="3" fill="#18e0e6" />
        </Playhead>
      </Stage>
      <ScrollRow $left={137}>
        <Side />
        <Scroll>
          <ScrollArrow aria-label="Scroll left"><Arrow /></ScrollArrow>
          <ScrollTrack><ScrollCursor /></ScrollTrack>
        </Scroll>
      </ScrollRow>
    </Panel>
  );
}

function PianoRoll() {
  return (
    <Roll>
      {keyPattern.split("").map((k, i) => (
        <KeyRow key={i} $left={84} $height={keyHeight(i)}>
          <Key $black={k === "B"}>{i === 10 ? "C3" : ""}</Key>
          <KeyLane $black={k === "B"} />
        </KeyRow>
      ))}
      <NoteLayer>
        {notes.map(([x, w, row, text]) => (
          <NoteBox key={`${x}-${row}`} style={{ left: x - 94, width: w, top: 10 + row * 14 }}>{text}</NoteBox>
        ))}
        <Vibrato fill="none" stroke="#2a2a2a" strokeWidth="1.200" aria-hidden="true">
          <g transform="translate(-94 -498)">
            <path d="M208 700l4-3 3-1 4-2.500 3 3.500 2 2.500 3 .5 3-4 6-1 2-3h2l3 6 2-1 2-5" />
            <path d="M457 629l5-2 4.500-3.500 3.500 5.500h5l3-4h22l1.500-3q1.200-1 2 0l3 6q1.200 1 2 0l3-6q1.200-1 2 0l3 6q1.200 1 2 0l3-6q1.200-1 2 0l3 6q1.200 1 2 0l3-6q1.200-1 2 0l3 6q1.200 1 2 0l3-6" />
          </g>
        </Vibrato>
      </NoteLayer>
    </Roll>
  );
}

function ParamChart() {
  const bars = Array.from({ length: 40 }, (_, i) => 119.5 + i * 64);
  const beats = Array.from({ length: 150 }, (_, i) => 103.5 + i * 16).filter((x) => (x - 119.5) % 64 !== 0);
  return (
    <Chart shapeRendering="crispEdges" role="img" aria-label="Dynamics">
      <g transform="translate(-94 -784)">
        <defs>
          <clipPath id="dyn"><path d={dynamicsPath} transform="translate(0 780) scale(.33333)" /></clipPath>
        </defs>
        <g transform="translate(0 780) scale(.33333)"><path d={velocityPath} fill="#151515" /></g>
        <g clipPath="url(#dyn)">
          <rect x="94" y="784" width="100%" height="200" fill="#adadad" />
          <path d={velocityPath} fill="#c0c0c0" transform="translate(0 780) scale(.33333)" />
        </g>
        <path d="M94 790.500h2400" stroke="#8c8c8c" />
        <path d="M94 983.500h2400" stroke="#3c3c3c" />
        <path d={bars.map((x) => `M${x} 785v5M${x} 984v6`).join("")} stroke="#363636" />
        <path d={bars.map((x) => `M${x} 791v192`).join("")} stroke="#fff" opacity=".45" />
        <path d={beats.map((x) => `M${x} 791v6`).join("")} stroke="#8c8c8c" />
        <path d={beats.map((x) => `M${x} 881v11M${x} 976v7`).join("")} stroke="#fff" opacity=".3" />
      </g>
    </Chart>
  );
}

function MusicalEditor() {
  return (
    <Panel>
      <PanelTitle>MUSICAL EDITOR - 1 [Lio Native]</PanelTitle>
      <Ruler $heavy={2}>
        <RulerRow $left={84} $kind="bars">
          <RulerName />
          <MeasureTicks>
            <BarNumbers $start={25}>
              {measures.map((n) => <BarNumber key={n} $pitch={64}>{n}</BarNumber>)}
            </BarNumbers>
          </MeasureTicks>
        </RulerRow>
        <RulerRow $left={84} $kind="tempo"><RulerName>TEMPO</RulerName><MeasureTicks /></RulerRow>
        <RulerRow $left={84} $kind="beat"><RulerName>BEAT</RulerName><MeasureTicks $beat /></RulerRow>
      </Ruler>
      <PianoRoll />
      <ScrollRow $left={84} $dark>
        <Side />
        <Scroll>
          <ScrollArrow aria-label="Scroll left"><Arrow /></ScrollArrow>
          <ScrollTrack><ScrollThumb /></ScrollTrack>
        </Scroll>
      </ScrollRow>
      <ParamLane $left={84}>
        <ParamSide>
          <ParamList>
            <ParamBlank />
            {params.map((p, i) => (
              <ParamRow key={p}>
                <EyeButton $on={i < 2} aria-label={`Show ${p}`}><Eye /></EyeButton>
                <ParamButton $active={p === "DYN"}>{p}</ParamButton>
              </ParamRow>
            ))}
          </ParamList>
          <Scale><ScaleMark>127</ScaleMark><ScaleMark>0</ScaleMark></Scale>
        </ParamSide>
        <ParamChart />
      </ParamLane>
      <Splitter>
        <svg width="8" height="4" viewBox="0 0 8 4" aria-hidden="true"><path d="M0 0h8L4 4z" fill="#333" /></svg>
      </Splitter>
    </Panel>
  );
}

export default function App() {
  return (
    <App_>
      <Global />
      <TitleBar>
        <GlassBackdrop />
        <Logo>V.</Logo>
        <Title>VOCALOID3 Editor - TRACK EDITOR</Title>
      </TitleBar>
      <Frame>
        <MenuBar>{menu.map((m) => <MenuItem key={m}>{m}</MenuItem>)}</MenuBar>
        <Transport />
        <Workspace>
          <TrackEditor />
          <MusicalEditor />
        </Workspace>
      </Frame>
    </App_>
  );
}
